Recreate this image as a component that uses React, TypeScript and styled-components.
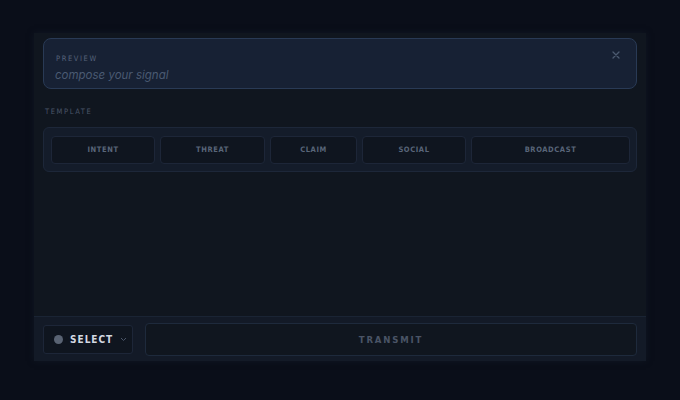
import React from "react";
import styled, { createGlobalStyle } from "styled-components";

const GlobalStyle = createGlobalStyle`
  html, body {
    margin: 0;
    padding: 0;
    background: #0a0e19;
    height: 100%;
  }
  body {
    font-family: "DejaVu Sans Condensed", "DejaVu Sans", sans-serif;
  }
  * { box-sizing: border-box; }
`;

const Page = styled.div`
  width: 680px;
  height: 400px;
  display: flex;
  justify-content: center;
  padding-top: 33px;
`;

const Panel = styled.div`
  width: 612px;
  height: 328px;
  background: #10161f;
  display: flex;
  flex-direction: column;
  box-shadow: 0 0 6px rgba(20, 28, 42, 0.6);
`;

const Body = styled.div`
  flex: 1;
  display: flex;
  flex-direction: column;
  padding: 5px 9px 0;
`;

const PreviewCard = styled.div`
  position: relative;
  height: 51px;
  background: #172134;
  border: 1px solid #293a55;
  border-radius: 8px;
  padding: 15px 12px 0 11px;
  display: flex;
  flex-direction: column;
  gap: 4px;
`;

const Label = styled.span<{ $indent?: number }>`
  font-family: "DejaVu Sans Condensed", "DejaVu Sans", sans-serif;
  font-size: 7.5px;
  letter-spacing: 1.6px;
  color: #56627a;
  padding-left: ${(p) => p.$indent ?? 0}px;
  line-height: 10px;
`;

const Placeholder = styled.span`
  font-family: Inter, "Noto Sans", sans-serif;
  font-style: italic;
  font-size: 11.5px;
  color: #4a5a72;
  line-height: 14px;
`;

const CloseButton = styled.button`
  position: absolute;
  top: 11px;
  right: 15px;
  width: 10px;
  height: 10px;
  padding: 0;
  border: none;
  background: none;
  display: flex;
  align-items: center;
  justify-content: center;
`;

const SectionLabel = styled(Label)`
  margin-top: 18px;
  margin-left: 2px;
  color: #4a5568;
`;

const TemplateGroup = styled.div`
  margin-top: 10px;
  height: 45px;
  background: #141c2a;
  border: 1px solid #1d2739;
  border-radius: 6px;
  padding: 8px 6px 7px 7px;
  display: grid;
  grid-template-columns: 104fr 105fr 87fr 104fr 159fr;
  gap: 5px;
`;

const TemplateButton = styled.button`
  background: #0f151f;
  border: 1px solid #1d2638;
  border-radius: 4px;
  font-family: "DejaVu Sans Condensed", "DejaVu Sans", sans-serif;
  font-weight: bold;
  font-size: 7.5px;
  letter-spacing: 0.6px;
  color: #596579;
  padding: 0 0 1px;
`;

const Footer = styled.div`
  height: 45px;
  background: #131a27;
  border-top: 1px solid #1a2434;
  display: flex;
  align-items: center;
  gap: 12px;
  padding: 0 9px;
`;

const SelectButton = styled.button`
  width: 90px;
  height: 29px;
  background: #0f151f;
  border: 1px solid #1d2638;
  border-radius: 3px;
  display: flex;
  align-items: center;
  padding: 0 0 0 10px;
  gap: 7px;
`;

const Dot = styled.span`
  width: 9px;
  height: 9px;
  border-radius: 50%;
  background: #596373;
`;

const SelectText = styled.span`
  font-family: "DejaVu Sans Condensed", "DejaVu Sans", sans-serif;
  font-weight: bold;
  font-size: 10px;
  letter-spacing: 1px;
  color: #d3d9e2;
`;

const TransmitButton = styled.button`
  flex: 1;
  height: 33px;
  background: #10161f;
  border: 1px solid #1e2a3c;
  border-radius: 4px;
  font-family: "DejaVu Sans Condensed", "DejaVu Sans", sans-serif;
  font-weight: bold;
  font-size: 9.5px;
  letter-spacing: 1.8px;
  color: #4a5466;
`;

const templates = ["INTENT", "THREAT", "CLAIM", "SOCIAL", "BROADCAST"];

export default function App() {
  return (
    <>
      <GlobalStyle />
      <Page>
        <Panel>
          <Body>
            <PreviewCard>
              <Label $indent={1}>PREVIEW</Label>
              <Placeholder>compose your signal</Placeholder>
              <CloseButton aria-label="Close">
                <svg width="8" height="8" viewBox="0 0 8 8">
                  <path d="M1 1L7 7M7 1L1 7" stroke="#4c5a70" strokeWidth="1.3" strokeLinecap="round" />
                </svg>
              </CloseButton>
            </PreviewCard>
            <SectionLabel>TEMPLATE</SectionLabel>
            <TemplateGroup>
              {templates.map((t) => (
                <TemplateButton key={t}>{t}</TemplateButton>
              ))}
            </TemplateGroup>
          </Body>
          <Footer>
            <SelectButton>
              <Dot />
              <SelectText>SELECT</SelectText>
              <svg width="7" height="5" viewBox="0 0 7 5">
                <path d="M1 1L3.5 3.5L6 1" stroke="#4a5568" strokeWidth="1" fill="none" />
              </svg>
            </SelectButton>
            <TransmitButton>TRANSMIT</TransmitButton>
          </Footer>
        </Panel>
      </Page>
    </>
  );
}
